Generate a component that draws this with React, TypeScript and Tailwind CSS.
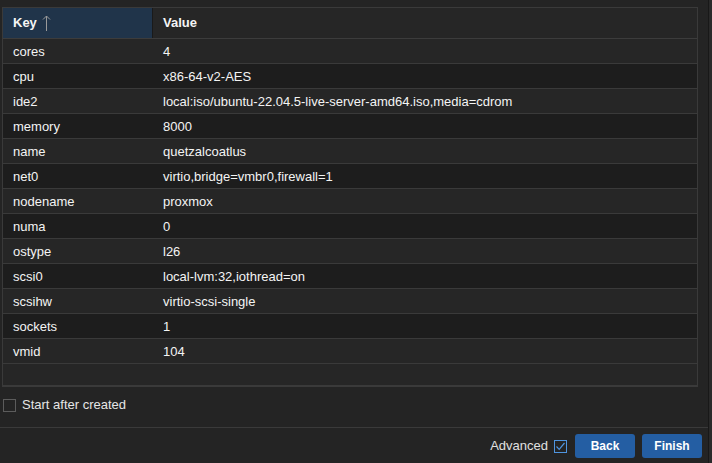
import React from 'react';

const rows: [string, string][] = [
  ['cores', '4'],
  ['cpu', 'x86-64-v2-AES'],
  ['ide2', 'local:iso/ubuntu-22.04.5-live-server-amd64.iso,media=cdrom'],
  ['memory', '8000'],
  ['name', 'quetzalcoatlus'],
  ['net0', 'virtio,bridge=vmbr0,firewall=1'],
  ['nodename', 'proxmox'],
  ['numa', '0'],
  ['ostype', 'l26'],
  ['scsi0', 'local-lvm:32,iothread=on'],
  ['scsihw', 'virtio-scsi-single'],
  ['sockets', '1'],
  ['vmid', '104'],
];

export default function App() {
  return (
    <div
      className="w-[712px] h-[463px] flex bg-[#2a2a2a] text-[13px] text-[#f4f4f4] overflow-hidden"
      style={{ fontFamily: '"Liberation Sans", Arial, sans-serif' }}
    >
      <div className="w-[708px] h-full flex flex-col bg-[#242424]">
        {/* Summary grid */}
        <div className="ml-[2px] mt-[7px] w-[696px] flex flex-col border border-b-2 border-[#3a3a3a] bg-[#262626]">
          <div className="h-[31px] flex border-b border-[#3c3c3c]">
            <div className="w-[150px] flex items-center gap-[5px] pl-[10px] bg-[#20344a] border-r border-[#1a1a1a] font-bold">
              <span>Key</span>
              <svg width="9" height="18" viewBox="0 0 9 18" className="text-[#9a9a9a]">
                <path d="M4.5 2 V17 M1 5.5 L4.5 2 L8 5.5" fill="none" stroke="currentColor" strokeWidth="1" />
              </svg>
            </div>
            <div className="flex-1 flex items-center pl-[10px] font-bold">Value</div>
          </div>
          <div className="h-[346px] flex flex-col">
            {rows.map(([k, v], i) => (
              <div
                key={k}
                className={`h-[25px] shrink-0 flex items-center pt-[1px] border-b border-[#3a3a3a] ${
                  i % 2 === 0 ? 'bg-[#262626]' : 'bg-[#1d1d1d]'
                }`}
              >
                <div className="w-[150px] pl-[10px]">{k}</div>
                <div className="flex-1 pl-[10px]">{v}</div>
              </div>
            ))}
          </div>
        </div>

        {/* Start after created */}
        <div className="h-[41px] flex items-center gap-[6px] pl-[3px] pb-[4px] border-b border-[#3a3a3a]">
          <div className="w-[13px] h-[13px] border border-[#5c5c5c]" />
          <span className="text-[#e6e6e6]">Start after created</span>
        </div>

        {/* Toolbar */}
        <div className="flex-1 flex items-center justify-end gap-[7px] pr-[6px] pt-[1px]">
          <div className="flex items-center gap-[6px]">
            <span className="text-[#e0e0e0]">Advanced</span>
            <svg width="13" height="13" viewBox="0 0 13 13">
              <rect x="0.5" y="0.5" width="12" height="12" fill="none" stroke="#4f95e0" />
              <path d="M2.5 6.5 L5.2 9.3 L10.5 3" fill="none" stroke="#4f95e0" strokeWidth="1.2" />
            </svg>
          </div>
          <button className="ml-[1px] w-[60px] h-[24px] rounded-[3px] bg-[#245ea3] text-white font-bold text-[12px]">Back</button>
          <button className="w-[60px] h-[24px] rounded-[3px] bg-[#245ea3] text-white font-bold text-[12px]">Finish</button>
        </div>
      </div>
      <div className="w-[1px] h-full bg-[#181818]" />
    </div>
  );
}
